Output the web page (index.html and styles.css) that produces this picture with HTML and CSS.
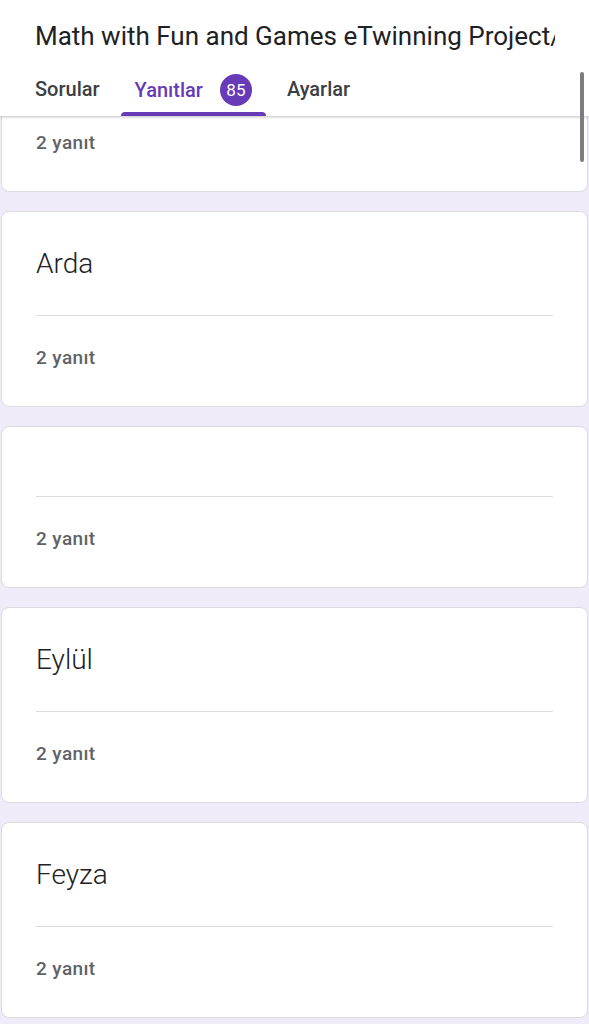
FILE: index.html
```html
<!DOCTYPE html>
<html lang="tr">
<head>
    <meta charset="UTF-8">
    <title>Math with Fun and Games eTwinning Project - Yanıtlar</title>
    <link rel="stylesheet" href="styles.css">
</head>
<body>
    <div id="ust">
        <h1 class="baslik">Math with Fun and Games eTwinning Project/</h1>
        <div class="sekmeler">
            <div class="sekme">
                <span class="sekme-yazi">Sorular</span>
                <span class="cizgi"></span>
            </div>
            <div class="sekme aktif">
                <span class="sekme-yazi">Yanıtlar <span class="rozet">85</span></span>
                <span class="cizgi"></span>
            </div>
            <div class="sekme">
                <span class="sekme-yazi">Ayarlar</span>
                <span class="cizgi"></span>
            </div>
        </div>
        <div class="kaydirma"></div>
    </div>

    <div id="liste">
        <div class="kart kesik">
            <p class="yanit">2 yanıt</p>
        </div>

        <div class="kart">
            <p class="soru">Arda</p>
            <hr>
            <p class="yanit">2 yanıt</p>
        </div>

        <div class="kart">
            <p class="soru"></p>
            <hr>
            <p class="yanit">2 yanıt</p>
        </div>

        <div class="kart">
            <p class="soru">Eylül</p>
            <hr>
            <p class="yanit">2 yanıt</p>
        </div>

        <div class="kart">
            <p class="soru">Feyza</p>
            <hr>
            <p class="yanit">2 yanıt</p>
        </div>
    </div>
</body>
</html>
```

FILE: styles.css
```css
body {
    margin: 0;
    font-family: Roboto, "Noto Sans", Arial, sans-serif;
    background-color: #f0ebf8;
    color: #202124;
}

#ust {
    position: relative;
    background-color: #fff;
    border-bottom: 1px solid #d5d5d8;
    box-shadow: 0 1px 2px rgba(0, 0, 0, 0.12);
}

.baslik {
    margin: 0 34px 0 35px;
    padding-top: 20px;
    font-size: 26px;
    font-weight: 400;
    line-height: 32px;
    white-space: nowrap;
    overflow: hidden;
}

.sekmeler {
    display: flex;
    gap: 7px;
    padding-left: 21px;
}

.sekme {
    display: flex;
    flex-direction: column;
    padding-top: 22px;
}

.sekme-yazi {
    display: flex;
    align-items: center;
    gap: 17px;
    padding: 0 14px;
    font-size: 20px;
    font-weight: 500;
    line-height: 30px;
    color: #3c4043;
}

.cizgi {
    height: 4px;
    margin-top: 6px;
    border-radius: 4px 4px 0 0;
}

.aktif .sekme-yazi {
    color: #673ab7;
}

.aktif .cizgi {
    background-color: #673ab7;
}

.rozet {
    display: inline-flex;
    align-items: center;
    justify-content: center;
    width: 32px;
    height: 32px;
    border-radius: 50%;
    background-color: #673ab7;
    color: #fff;
    font-size: 17px;
    font-weight: 400;
}

.kaydirma {
    position: absolute;
    top: 72px;
    right: 5px;
    width: 4px;
    height: 90px;
    border-radius: 2px;
    background-color: #7d7d7d;
}

#liste {
    display: flex;
    flex-direction: column;
    gap: 19px;
    padding: 0 1px;
}

.kart {
    background-color: #fff;
    border: 1px solid #dadce0;
    border-radius: 8px;
    padding: 35px 34px 0;
}

.kart.kesik {
    border-top: none;
    border-radius: 0 0 8px 8px;
    padding-top: 0;
}

.soru {
    margin: 0 0 34px;
    font-size: 28px;
    font-weight: 300;
    line-height: 34px;
}

hr {
    margin: 0;
    border: none;
    border-top: 1px solid #dadce0;
}

.yanit {
    margin: 0;
    padding: 30px 0 36px;
    font-size: 19px;
    font-weight: 500;
    letter-spacing: 0.4px;
    line-height: 24px;
    color: #5f6368;
}

.kesik .yanit {
    padding-top: 14px;
}
```
